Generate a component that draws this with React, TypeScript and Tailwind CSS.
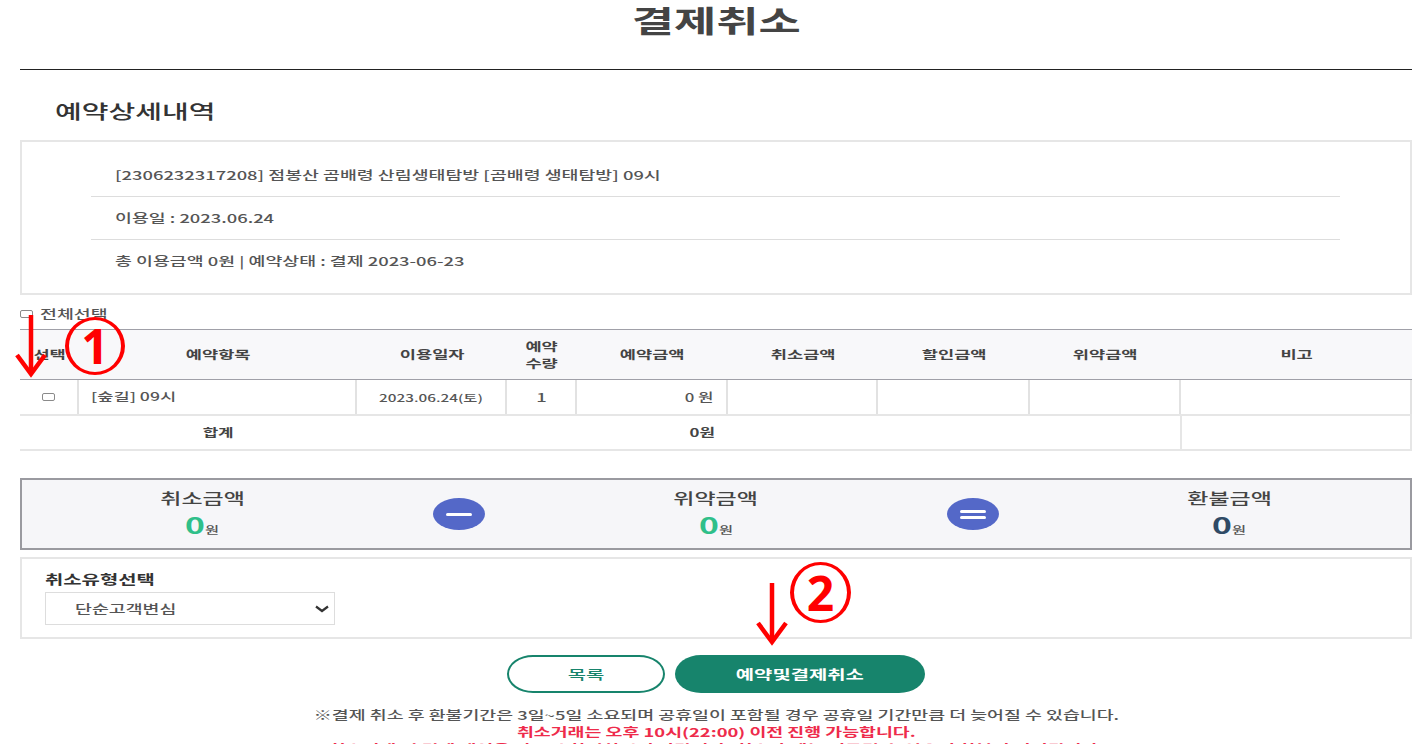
const font = { fontFamily: '"Noto Sans CJK KR", "Noto Sans", sans-serif' };

function W({ children, left = false }: { children: React.ReactNode; left?: boolean }) {
  return (
    <span className={`inline-block whitespace-nowrap scale-x-[1.53] ${left ? "origin-left" : "origin-center"}`}>
      {children}
    </span>
  );
}

function Box() {
  return <span className="inline-block w-[13px] h-[8px] border border-[#8a8a8a] rounded-[2px] bg-white" />;
}

function Head({ w, children }: { w: string; children: React.ReactNode }) {
  return (
    <div className={`${w} flex items-center justify-center text-center text-[11.5px] leading-[17px] font-bold text-[#444]`}>
      {children}
    </div>
  );
}

function Cell({ w, children, align = "justify-center" }: { w: string; children?: React.ReactNode; align?: string }) {
  return (
    <div className={`${w} flex items-center ${align} border-r-2 border-[#e2e2e2] text-[12px] font-medium text-[#555]`}>
      {children}
    </div>
  );
}

function Amount({ label, color }: { label: string; color: string }) {
  return (
    <div className="flex flex-col items-center pt-[3px]">
      <div className="text-[15px] leading-[20px] font-medium text-[#444]"><W>{label}</W></div>
      <div className="flex items-baseline justify-center leading-[28px] mt-[2px]">
        <W>
          <span className={`text-[22px] font-bold ${color}`}>0</span>
          <span className="text-[10px] font-medium text-[#555]">원</span>
        </W>
      </div>
    </div>
  );
}

function Arrow() {
  return (
    <svg width="32" height="63" viewBox="0 0 32 63" fill="none" stroke="#ff0000">
      <path d="M16 0V58" strokeWidth="4.5" />
      <path d="M2 40L16 59L30 40" strokeWidth="4.5" />
    </svg>
  );
}

function Mark({ n }: { n: string }) {
  return (
    <div className="w-full h-full rounded-[50%] border-x-[4px] border-y-[3px] border-[#ff0000] flex items-center justify-center text-[#ff0000] text-[48px] font-bold leading-none [font-family:'Noto_Sans',sans-serif]">
      {n}
    </div>
  );
}

export default function App() {
  return (
    <div style={font} className="relative w-[1417px] h-[744px] overflow-hidden bg-white pl-[20px] pr-[5px]">
      <h1 className="h-[69px] text-center text-[30px] leading-[38px] font-bold text-[#444]">
        <W>결제취소</W>
      </h1>
      <div className="h-px bg-[#222]" />
      <h2 className="mt-[29px] pl-[35px] text-[19px] leading-[24px] font-medium text-[#333]">
        <W left>예약상세내역</W>
      </h2>
      <section className="mt-[17px] h-[155px] border-2 border-[#e6e6e6] pl-[69px] pr-[70px] pt-[12px] flex flex-col text-[12px] font-medium text-[#555]">
        <div className="h-[43px] flex items-center pl-[24px] border-b border-[#ddd]"><W left>[2306232317208] 점봉산 곰배령 산림생태탐방 [곰배령 생태탐방] 09시</W></div>
        <div className="h-[43px] flex items-center pl-[24px] border-b border-[#ddd]"><W left>이용일 : 2023.06.24</W></div>
        <div className="h-[42px] flex items-center pl-[24px]"><W left>총 이용금액 0원 | 예약상태 : 결제 2023-06-23</W></div>
      </section>
      <div className="h-[34px] pt-[3px] flex items-center gap-[7px] text-[12px] font-medium text-[#555]">
        <Box />
        <W left>전체선택</W>
      </div>
      <section>
        <div className="h-[51px] flex border-y border-[#a0a0a8] bg-[#f8f8fa]">
          <Head w="w-[59px]"><W>선택</W></Head>
          <Head w="w-[278px]"><W>예약항목</W></Head>
          <Head w="w-[150px]"><W>이용일자</W></Head>
          <Head w="w-[70px]"><W>예약<br />수량</W></Head>
          <Head w="w-[151px]"><W>예약금액</W></Head>
          <Head w="w-[150px]"><W>취소금액</W></Head>
          <Head w="w-[152px]"><W>할인금액</W></Head>
          <Head w="w-[151px]"><W>위약금액</W></Head>
          <Head w="w-[231px]"><W>비고</W></Head>
        </div>
        <div className="h-[36px] flex border-b-2 border-[#e6e6e6]">
          <Cell w="w-[59px]"><Box /></Cell>
          <Cell w="w-[278px]" align="justify-start pl-[12px]"><span className="text-[11.5px]"><W left>[숲길] 09시</W></span></Cell>
          <Cell w="w-[150px]"><span className="text-[10px]"><W>2023.06.24(토)</W></span></Cell>
          <Cell w="w-[70px]"><W>1</W></Cell>
          <Cell w="w-[151px]" align="justify-end pr-[12px]"><span className="inline-block whitespace-nowrap scale-x-[1.4] origin-right">0 원</span></Cell>
          <Cell w="w-[150px]" />
          <Cell w="w-[152px]" />
          <Cell w="w-[151px]" />
          <Cell w="w-[231px]" />
        </div>
        <div className="h-[35px] flex border-b-2 border-[#e6e6e6] text-[11px] font-bold text-[#444]">
          <div className="w-[396px] flex items-center justify-center"><W>합계</W></div>
          <div className="w-[572px] flex items-center justify-center"><W>0원</W></div>
          <div className="w-[192px]" />
          <div className="w-[232px] border-x-2 border-[#e6e6e6]" />
        </div>
      </section>
      <section className="mt-[27px] h-[72px] border-2 border-[#9a9aa0] bg-[#f6f6f9] px-[52px] grid grid-cols-5 items-center justify-items-center">
        <Amount label="취소금액" color="text-[#2fbf8a]" />
        <div className="w-[52px] h-[32px] rounded-[50%] bg-[#5468c8] flex items-center justify-center">
          <span className="w-[26px] h-[3px] bg-white rounded-sm" />
        </div>
        <Amount label="위약금액" color="text-[#2fbf8a]" />
        <div className="w-[52px] h-[32px] rounded-[50%] bg-[#5468c8] flex flex-col gap-[3px] items-center justify-center">
          <span className="w-[26px] h-[3px] bg-white rounded-sm" />
          <span className="w-[26px] h-[3px] bg-white rounded-sm" />
        </div>
        <Amount label="환불금액" color="text-[#2f4a66]" />
      </section>
      <section className="mt-[7px] h-[82px] border-2 border-[#e6e6e6] pl-[23px] pt-[11px]">
        <div className="text-[13px] leading-[18px] font-bold text-[#333]"><W left>취소유형선택</W></div>
        <div className="mt-[4px] w-[290px] h-[33px] border border-[#ddd] flex items-center justify-between pl-[29px] pr-[4px] text-[12px] font-medium text-[#555]">
          <W left>단순고객변심</W>
          <svg width="16" height="8" viewBox="0 0 16 8" fill="none" stroke="#333" strokeWidth="2.2"><path d="M2 1.5L8 6L14 1.5" /></svg>
        </div>
      </section>
      <div className="mt-[16px] flex justify-center gap-[10px]">
        <button className="w-[158px] h-[38px] rounded-[26px/19px] border-2 border-[#17846c] bg-white text-[13px] font-medium text-[#17846c]"><W>목록</W></button>
        <button className="w-[250px] h-[38px] rounded-[26px/19px] bg-[#17846c] text-[13px] font-bold text-white"><W>예약및결제취소</W></button>
      </div>
      <div className="mt-[13px] text-center text-[12px] leading-[17px] font-medium text-[#555]">
        <div><W>※결제 취소 후 환불기간은 3일~5일 소요되며 공휴일이 포함될 경우 공휴일 기간만큼 더 늦어질 수 있습니다.</W></div>
        <div className="font-bold text-[#ee2b4b]"><W>취소거래는 오후 10시(22:00) 이전 진행 가능합니다.</W></div>
        <div className="font-bold text-[#ee2b4b]"><W>취소거래 전 결제 내역을 반드시 확인하시기 바랍니다. 취소 후에는 되돌릴 수 없으며 환불이 지연됩니다.</W></div>
      </div>

      <div className="absolute left-[15px] top-[315px]"><Arrow /></div>
      <div className="absolute left-[65px] top-[317px] w-[60px] h-[58px]"><Mark n="1" /></div>
      <div className="absolute left-[756px] top-[583px]"><Arrow /></div>
      <div className="absolute left-[790px] top-[562px] w-[61px] h-[61px]"><Mark n="2" /></div>
    </div>
  );
}
